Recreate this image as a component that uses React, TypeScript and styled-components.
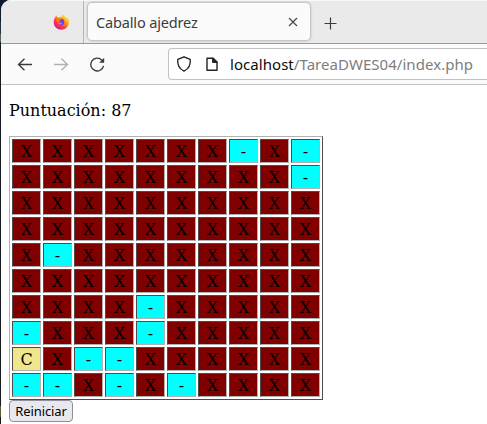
import React from 'react';
import styled, { createGlobalStyle } from 'styled-components';

const GlobalStyle = createGlobalStyle`
  * { box-sizing: border-box; }
  body { margin: 0; background: #15191f; overflow: hidden; }
`;

const Desktop = styled.div`
  width: 487px;
  height: 424px;
  padding-left: 1px;
  overflow: hidden;
  background: linear-gradient(#0e1d2e 0 22px, #27313b 22px 34px, #53645f 34px 42px, #171b20 42px 406px, #59623b 406px 417px, #171b20 417px);
`;

const BrowserWindow = styled.div`
  height: 424px;
  display: flex;
  flex-direction: column;
  background: #fff;
  border-top-left-radius: 10px;
  overflow: hidden;
`;

const TabBar = styled.div`
  height: 44px;
  flex: none;
  display: flex;
  background: #eaeaea;
  border-top: 1px solid #f8f8f8;
  border-bottom: 1px solid #999;
`;

const PinnedArea = styled.div`
  width: 83px;
  padding: 13px 0 0 52px;
  border-right: 1px solid #b4b4b4;
`;

const Tab = styled.div`
  width: 222px;
  height: 37px;
  margin: 2px 0 0 4px;
  padding: 1px 9px 0 8px;
  display: flex;
  align-items: center;
  justify-content: space-between;
  background: #fbfbfb;
  border-radius: 4px;
  box-shadow: 0 0 3px rgba(0, 0, 0, 0.45);
`;

const TabTitle = styled.span`
  font: 14.5px/20px 'Noto Sans', 'Open Sans', sans-serif;
  letter-spacing: -0.15px;
  color: #3c3c3c;
  white-space: nowrap;
`;

const NewTab = styled.div`
  padding: 15px 0 0 14px;
`;

const Toolbar = styled.div`
  height: 41px;
  flex: none;
  display: flex;
  align-items: center;
  background: #fbfbfb;
  border-bottom: 1px solid #c4c4c4;
`;

const NavButtons = styled.div`
  width: 167px;
  padding-left: 15px;
  display: flex;
  gap: 20px;
`;

const AddressBar = styled.div`
  flex: 1;
  height: 32px;
  padding-left: 7px;
  display: flex;
  align-items: center;
  background: #fff;
  border: 1px solid #c2c2c2;
  border-right: 0;
  border-radius: 4px 0 0 4px;
`;

const Url = styled.span`
  margin-left: 11px;
  font: 15px/20px 'Noto Sans', 'Open Sans', sans-serif;
  letter-spacing: 0.05px;
  color: #7d7d7d;
  white-space: nowrap;
`;

const Host = styled.span`
  color: #0c0c0d;
`;

const Page = styled.main`
  flex: 1;
  padding: 16px 8px 0;
  font: 16px/19px 'DejaVu Serif', serif;
  color: #000;
`;

const Score = styled.p`
  margin: 0 0 16px;
`;

const Board = styled.table`
  width: 314px;
  height: 264px;
  table-layout: fixed;
  border: 1px solid;
  border-color: #b0b0b0 #4c4c4c #4c4c4c #b0b0b0;
  border-spacing: 2px;
  border-collapse: separate;
`;

const squareColors: Record<string, string> = { X: '#800000', '-': '#00ffff', C: '#f0e68c' };

const Square = styled.td<{ $kind: string }>`
  width: 29px;
  height: 24px;
  padding: 1px;
  text-align: center;
  line-height: 19px;
  background: ${({ $kind }) => squareColors[$kind]};
  border: 1px solid;
  border-color: #4c4c4c #b0b0b0 #b0b0b0 #4c4c4c;
`;

const ResetButton = styled.button`
  display: block;
  width: 64px;
  height: 22px;
  padding: 0;
  font: 13px/18px 'Noto Sans', 'Open Sans', sans-serif;
  letter-spacing: -0.1px;
  color: #000;
  background: #e9e9ed;
  border: 1px solid #8f8f9d;
  border-radius: 4px;
`;

const Firefox = () => (
  <svg width="17" height="17" viewBox="0 0 17 17">
    <defs>
      <linearGradient id="flame" x1="0.85" y1="0.1" x2="0.2" y2="0.9">
        <stop offset="0" stopColor="#fff44f" />
        <stop offset="0.4" stopColor="#ff980e" />
        <stop offset="0.7" stopColor="#ff3647" />
        <stop offset="1" stopColor="#e31587" />
      </linearGradient>
    </defs>
    <path d="M2.3 3C2.5 2.2 3 1.7 3.4 1.5L4.2 3.3L6 3.4C7 2.8 8 3 8.6 3.2C8.7 1.8 9.2.8 10.2 0C10.4 2 12 2.7 13.2 4L13.8 3C15.3 4.4 16 6.2 16 8.1C16 12.4 12.7 15.8 8.4 15.8C4 15.8.7 12.5.7 8.3C.7 6.2 1.3 4.5 2.3 3Z" fill="url(#flame)" />
    <circle cx="8.1" cy="7.9" r="3.2" fill="#7542e5" />
    <path d="M3.2 5L8.2 5.4C8.1 6.5 6.5 6.5 6.1 7.2L6.3 8.3C7 9.5 8.5 8.7 9.5 9C8.5 10.8 6 11 4.4 9.2Z" fill="#ff7a20" />
  </svg>
);

const Back = () => (
  <svg width="18" height="16" viewBox="0 0 18 16" fill="none" stroke="#3a3a3a" strokeWidth="1.35">
    <path d="M16 8.5H2.5M8.5 2.7L2.5 8.5L8.5 14.3" />
  </svg>
);

const Forward = () => (
  <svg width="16" height="16" viewBox="0 0 16 16" fill="none" stroke="#b0b0b0" strokeWidth="1.35">
    <path d="M0 8.5H13.5M7.5 2.7L13.5 8.5L7.5 14.3" />
  </svg>
);

const Reload = () => (
  <svg width="18" height="16" viewBox="0 0 18 16" fill="none" stroke="#3a3a3a" strokeWidth="1.35">
    <path d="M13.5 9.8A6.4 6.4 0 1 1 11.9 4.2" />
    <path d="M14.2 1.8V6.8H9.2Z" fill="#3a3a3a" stroke="none" />
  </svg>
);

const Shield = () => (
  <svg width="16" height="16" viewBox="0 0 16 16" fill="none" stroke="#222" strokeWidth="1.35" strokeLinejoin="round">
    <path d="M8 .8L14.2 3.4Q15.2 11.5 8 15.2Q.8 11.5 1.8 3.4Z" />
  </svg>
);

const PageIcon = styled.svg`
  margin-left: 13px;
`;

const rows = [
  'XXXXXXX-X-',
  'XXXXXXXXX-',
  'XXXXXXXXXX',
  'XXXXXXXXXX',
  'X-XXXXXXXX',
  'XXXXXXXXXX',
  'XXXX-XXXXX',
  '-XXX-XXXXX',
  'CX--XXXXXX',
  '--X-X-XXXX',
];

export default function App() {
  return (
    <Desktop>
      <GlobalStyle />
      <BrowserWindow>
        <TabBar>
          <PinnedArea><Firefox /></PinnedArea>
          <Tab>
            <TabTitle>Caballo ajedrez</TabTitle>
            <svg width="16" height="16" viewBox="0 0 16 16" stroke="#444" strokeWidth="1.1">
              <path d="M4 4L12 12M12 4L4 12" />
            </svg>
          </Tab>
          <NewTab>
            <svg width="13" height="13" viewBox="0 0 13 13" stroke="#3a3a3a" strokeWidth="1.2">
              <path d="M6.5 .5V12.5M.5 6.5H12.5" />
            </svg>
          </NewTab>
        </TabBar>
        <Toolbar>
          <NavButtons><Back /><Forward /><Reload /></NavButtons>
          <AddressBar>
            <Shield />
            <PageIcon width="14" height="15" viewBox="0 0 14 15" fill="none" stroke="#222" strokeWidth="1.4" strokeLinejoin="round">
              <path d="M2 1.2H8L12 5V13.3H2Z" />
              <path d="M7.8 1.2V5.2H12Z" fill="#222" />
            </PageIcon>
            <Url><Host>localhost</Host>/TareaDWES04/index.php</Url>
          </AddressBar>
        </Toolbar>
        <Page>
          <Score>Puntuación: 87</Score>
          <Board>
            <tbody>
              {rows.map((row, y) => (
                <tr key={y}>
                  {row.split('').map((kind, x) => (
                    <Square key={x} $kind={kind}>{kind}</Square>
                  ))}
                </tr>
              ))}
            </tbody>
          </Board>
          <ResetButton>Reiniciar</ResetButton>
        </Page>
      </BrowserWindow>
    </Desktop>
  );
}
